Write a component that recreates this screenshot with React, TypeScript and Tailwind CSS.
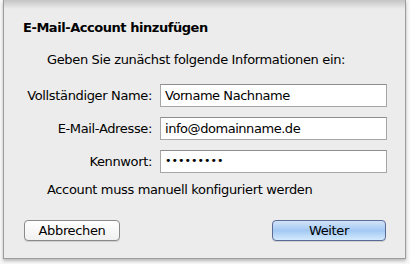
import React from 'react'

const font = { fontFamily: '"DejaVu Sans", "Liberation Sans", sans-serif' }

const FIELDS: { label: string; value: string; password?: boolean }[] = [
  { label: 'Vollständiger Name:', value: 'Vorname Nachname' },
  { label: 'E-Mail-Adresse:', value: 'info@domainname.de' },
  { label: 'Kennwort:', value: '•••••••••', password: true },
]

export default function App() {
  return (
    <div className="w-[410px] h-[264px] bg-[#f7f7f7] overflow-hidden" style={font}>
      <div className="relative ml-[3px] w-[403px] h-[259px] bg-[#ececec] border-x border-b border-[#9c9c9c] shadow-[0_2px_3px_rgba(0,0,0,0.25)]">
        {/* Schatten der Toolbar oben */}
        <div className="absolute inset-x-0 top-0 h-[9px] bg-gradient-to-b from-[#c4c4c4] to-[#ececec]" />

        <div className="relative flex flex-col pt-[19px] text-[13px] text-black">
          <div className="pl-[19px] font-bold leading-[18px] tracking-[-0.45px]">E-Mail-Account hinzufügen</div>
          <div className="pl-[43px] mt-[14px] leading-[18px] tracking-[-0.35px]">
            Geben Sie zunächst folgende Informationen ein:
          </div>

          <div className="flex flex-col gap-[10px] mt-[15px]">
            {FIELDS.map(f => (
              <div key={f.label} className="flex items-center">
                <div className="w-[148px] text-right tracking-[-0.35px]">{f.label}</div>
                <div className="ml-[8px] w-[227px] h-[23px] bg-white border border-[#a6a6a6] border-t-[#8e8e8e] flex items-center pl-[4px] tracking-[-0.45px]">
                  {f.password ? <span className="text-[11px] tracking-[0px]">{f.value}</span> : f.value}
                </div>
              </div>
            ))}
          </div>

          <div className="pl-[43px] mt-[8px] leading-[18px] tracking-[-0.35px]">
            Account muss manuell konfiguriert werden
          </div>

          <div className="flex justify-between items-center mt-[21px] pl-[20px] pr-[19px]">
            <button className="w-[96px] h-[21px] rounded-[4px] border border-[#8a8a8a] bg-gradient-to-b from-[#ffffff] to-[#f0f0f0] shadow-[0_1px_0_rgba(0,0,0,0.12)] text-[13px] leading-none tracking-[-0.35px]">
              Abbrechen
            </button>
            <button className="w-[114px] h-[21px] rounded-[4px] border border-[#5a6b96] bg-gradient-to-b from-[#d2e3f8] via-[#a3c9f3] to-[#d4eafd] shadow-[0_1px_0_rgba(0,0,0,0.12)] text-[13px] leading-none tracking-[-0.35px]">
              Weiter
            </button>
          </div>
        </div>
      </div>
    </div>
  )
}
